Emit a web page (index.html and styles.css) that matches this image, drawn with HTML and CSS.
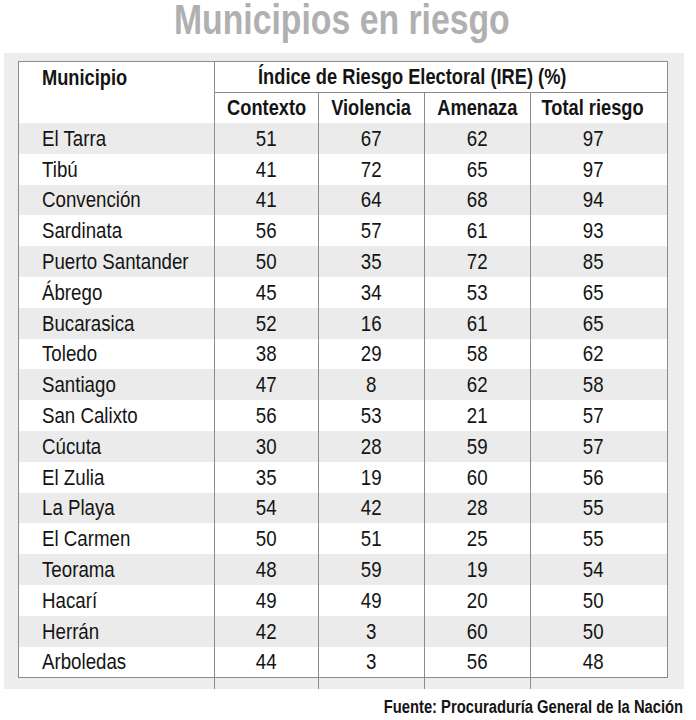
FILE: index.html
```html
<!DOCTYPE html>
<html lang="es">
<head>
<meta charset="utf-8">
<title>Municipios en riesgo</title>
<link rel="stylesheet" href="styles.css">
</head>
<body>
<h1 class="title"><span class="sq">Municipios en riesgo</span></h1>
<div class="panel">
<table class="ire">
<colgroup>
<col class="c-muni"><col class="c-ctx"><col class="c-vio"><col class="c-ame"><col class="c-tot">
</colgroup>
<thead>
<tr class="h1">
<th class="muni-h" rowspan="2"><span class="sq">Municipio</span></th>
<th class="ire-h" colspan="4"><span class="sq">Índice de Riesgo Electoral (IRE) (%)</span></th>
</tr>
<tr class="h2">
<th><span class="sq">Contexto</span></th><th><span class="sq">Violencia</span></th><th><span class="sq">Amenaza</span></th><th class="tot"><span class="sq">Total riesgo</span></th>
</tr>
</thead>
<tbody>
<tr><td class="m"><span class="sq">El Tarra</span></td><td><span class="sq">51</span></td><td><span class="sq">67</span></td><td><span class="sq">62</span></td><td class="tot"><span class="sq">97</span></td></tr>
<tr><td class="m"><span class="sq">Tibú</span></td><td><span class="sq">41</span></td><td><span class="sq">72</span></td><td><span class="sq">65</span></td><td class="tot"><span class="sq">97</span></td></tr>
<tr><td class="m"><span class="sq">Convención</span></td><td><span class="sq">41</span></td><td><span class="sq">64</span></td><td><span class="sq">68</span></td><td class="tot"><span class="sq">94</span></td></tr>
<tr><td class="m"><span class="sq">Sardinata</span></td><td><span class="sq">56</span></td><td><span class="sq">57</span></td><td><span class="sq">61</span></td><td class="tot"><span class="sq">93</span></td></tr>
<tr><td class="m"><span class="sq">Puerto Santander</span></td><td><span class="sq">50</span></td><td><span class="sq">35</span></td><td><span class="sq">72</span></td><td class="tot"><span class="sq">85</span></td></tr>
<tr><td class="m"><span class="sq">Ábrego</span></td><td><span class="sq">45</span></td><td><span class="sq">34</span></td><td><span class="sq">53</span></td><td class="tot"><span class="sq">65</span></td></tr>
<tr><td class="m"><span class="sq">Bucarasica</span></td><td><span class="sq">52</span></td><td><span class="sq">16</span></td><td><span class="sq">61</span></td><td class="tot"><span class="sq">65</span></td></tr>
<tr><td class="m"><span class="sq">Toledo</span></td><td><span class="sq">38</span></td><td><span class="sq">29</span></td><td><span class="sq">58</span></td><td class="tot"><span class="sq">62</span></td></tr>
<tr><td class="m"><span class="sq">Santiago</span></td><td><span class="sq">47</span></td><td><span class="sq">8</span></td><td><span class="sq">62</span></td><td class="tot"><span class="sq">58</span></td></tr>
<tr><td class="m"><span class="sq">San Calixto</span></td><td><span class="sq">56</span></td><td><span class="sq">53</span></td><td><span class="sq">21</span></td><td class="tot"><span class="sq">57</span></td></tr>
<tr><td class="m"><span class="sq">Cúcuta</span></td><td><span class="sq">30</span></td><td><span class="sq">28</span></td><td><span class="sq">59</span></td><td class="tot"><span class="sq">57</span></td></tr>
<tr><td class="m"><span class="sq">El Zulia</span></td><td><span class="sq">35</span></td><td><span class="sq">19</span></td><td><span class="sq">60</span></td><td class="tot"><span class="sq">56</span></td></tr>
<tr><td class="m"><span class="sq">La Playa</span></td><td><span class="sq">54</span></td><td><span class="sq">42</span></td><td><span class="sq">28</span></td><td class="tot"><span class="sq">55</span></td></tr>
<tr><td class="m"><span class="sq">El Carmen</span></td><td><span class="sq">50</span></td><td><span class="sq">51</span></td><td><span class="sq">25</span></td><td class="tot"><span class="sq">55</span></td></tr>
<tr><td class="m"><span class="sq">Teorama</span></td><td><span class="sq">48</span></td><td><span class="sq">59</span></td><td><span class="sq">19</span></td><td class="tot"><span class="sq">54</span></td></tr>
<tr><td class="m"><span class="sq">Hacarí</span></td><td><span class="sq">49</span></td><td><span class="sq">49</span></td><td><span class="sq">20</span></td><td class="tot"><span class="sq">50</span></td></tr>
<tr><td class="m"><span class="sq">Herrán</span></td><td><span class="sq">42</span></td><td><span class="sq">3</span></td><td><span class="sq">60</span></td><td class="tot"><span class="sq">50</span></td></tr>
<tr class="last"><td class="m"><span class="sq">Arboledas</span></td><td><span class="sq">44</span></td><td><span class="sq">3</span></td><td><span class="sq">56</span></td><td class="tot"><span class="sq">48</span></td></tr>
<tr class="tail"><td></td><td></td><td></td><td></td><td></td></tr>
</tbody>
</table>
</div>
<p class="source"><span class="sq">Fuente: Procuraduría General de la Nación</span></p>
</body>
</html>
```
FILE: styles.css
```css
html, body {
  margin: 0;
  padding: 0;
  background: #ffffff;
}
body {
  width: 696px;
  font-family: "Liberation Sans", Arial, sans-serif;
  color: #141414;
}
.sq {
  display: inline-block;
  white-space: nowrap;
  transform: scaleX(0.83);
  transform-origin: center;
}
.title {
  margin: 0;
  height: 53px;
  padding-right: 12px;
  line-height: 38px;
  font-size: 43px;
  font-weight: bold;
  color: #b0b0b0;
  text-align: center;
  white-space: nowrap;
}
.title .sq {
  transform: scaleX(0.785);
}
.panel {
  margin-left: 4px;
  width: 680px;
  box-sizing: border-box;
  background: #ededed;
  padding: 8px 17px 0 14px;
}
.ire {
  width: 649px;
  border-collapse: collapse;
  table-layout: fixed;
  font-size: 22px;
}
.c-muni { width: 196px; }
.c-ctx { width: 104px; }
.c-vio { width: 106px; }
.c-ame { width: 106px; }
.c-tot { width: 137px; }
.ire th, .ire td {
  padding: 0;
  text-align: center;
  vertical-align: middle;
  line-height: 22px;
  white-space: nowrap;
}
.ire th {
  font-weight: bold;
  background: #ffffff;
}
.ire td .sq {
  transform: scaleX(0.85);
}
.h1 th {
  height: 30px;
}
.h2 th {
  height: 30px;
  border-left: 1px solid #8c8c8c;
}
.ire .muni-h {
  text-align: left;
  vertical-align: top;
  padding: 5px 0 0 23px;
  border-left: 1px solid #8c8c8c;
  border-top: 1px solid #8c8c8c;
  border-right: 1px solid #8c8c8c;
}
.ire .ire-h {
  text-align: left;
  padding-left: 43px;
  border-top: 1px solid #8c8c8c;
  border-right: 1px solid #8c8c8c;
  border-bottom: 1px solid #8c8c8c;
}
.muni-h .sq, .ire-h .sq, .ire td.m .sq {
  transform-origin: left center;
}
.ire .h2 th.tot {
  border-right: 1px solid #8c8c8c;
  padding-right: 13px;
}
.ire tbody tr {
  height: 30.8px;
}
.ire tbody tr:nth-child(odd) td {
  background: #ebebeb;
}
.ire tbody tr:nth-child(even) td {
  background: #ffffff;
}
.ire td {
  border-left: 1px solid #8c8c8c;
  font-weight: normal;
  padding-top: 1px;
}
.ire td.m {
  text-align: left;
  padding-left: 23px;
}
.ire td.tot {
  border-right: 1px solid #8c8c8c;
  padding-right: 12px;
}
.ire tr.last td {
  border-bottom: 1px solid #8c8c8c;
}
.ire tbody tr.tail {
  height: 12px;
}
.ire tbody tr.tail td {
  background: #ededed;
}
.ire tr.tail td:first-child {
  border-left: none;
}
.ire tr.tail td:last-child {
  border-right: none;
}
.source {
  margin: 8px 13px 0 0;
  text-align: right;
  font-size: 18px;
  font-weight: bold;
  line-height: 20px;
  white-space: nowrap;
}
.source .sq {
  transform: scaleX(0.82);
  transform-origin: right center;
}
```
